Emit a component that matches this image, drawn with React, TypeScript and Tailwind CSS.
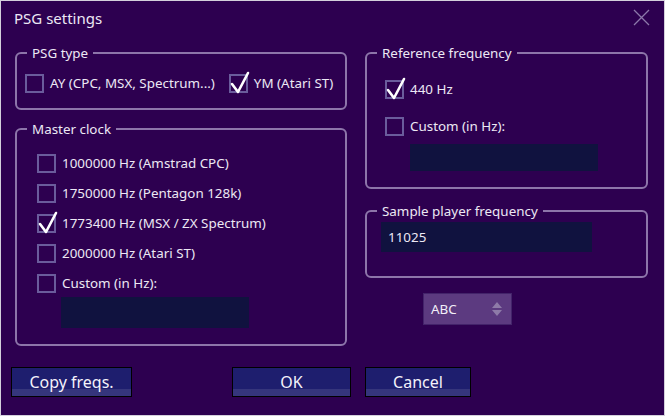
import type { ReactNode } from "react"

function Check({ checked, label }: { checked?: boolean; label: string }) {
    return (
        <div className="flex items-center gap-[6px] h-[20px]">
            <div className="relative w-[19px] h-[19px] border-2 border-[#6a5c9c] shrink-0">
                {checked && (
                    <svg className="absolute left-[-2px] top-[-5px] overflow-visible" width="22" height="24" viewBox="0 0 22 24">
                        <path d="M3 13 L9 21 L19 2" fill="none" stroke="#ffffff" strokeWidth="2.6" strokeLinecap="round" strokeLinejoin="round" />
                    </svg>
                )}
            </div>
            <span className="text-[13.4px] text-[#ece8f4] whitespace-nowrap">{label}</span>
        </div>
    )
}

function Group({ title, className, children }: { title: string; className?: string; children: ReactNode }) {
    return (
        <fieldset className={"min-w-0 border-2 border-[#8d75aa] rounded-[6px] px-[8px] " + (className ?? "")}>
            <legend className="ml-[2px] px-[5px] text-[13.4px] leading-[18px] text-[#ece8f4]">{title}</legend>
            {children}
        </fieldset>
    )
}

function Button({ label, className }: { label: string; className?: string }) {
    return (
        <button className={"h-[30px] border border-black bg-[linear-gradient(#1e1e6e_76%,#35357c_76%)] text-[16px] text-[#f4f2fa] " + (className ?? "")}>
            {label}
        </button>
    )
}

export default function App() {
    return (
        <div className="w-[665px] h-[416px] bg-[#2d0050] border border-[#d4d0dc] flex flex-col font-['Noto_Sans',sans-serif] overflow-hidden">
            <div className="h-[43px] flex items-start justify-between pl-[13px] pr-[14px] pt-[6px]">
                <span className="text-[15px] text-[#ece8f4]">PSG settings</span>
                <svg width="17" height="17" viewBox="0 0 17 17" className="mt-[2px]">
                    <path d="M1 1 L16 16 M16 1 L1 16" stroke="#8c78aa" strokeWidth="1.3" />
                </svg>
            </div>

            <div className="flex gap-[18px] pl-[14px]">
                <div className="w-[332px] flex flex-col gap-[10px]">
                    <Group title="PSG type" className="h-[66px]">
                        <div className="flex gap-[14px] pt-[11px]">
                            <Check label="AY (CPC, MSX, Spectrum...)" />
                            <Check checked label="YM (Atari ST)" />
                        </div>
                    </Group>
                    <Group title="Master clock" className="h-[226px]">
                        <div className="flex flex-col gap-[10px] pl-[12px] pt-[15px]">
                            <Check label="1000000 Hz (Amstrad CPC)" />
                            <Check label="1750000 Hz (Pentagon 128k)" />
                            <Check checked label="1773400 Hz (MSX / ZX Spectrum)" />
                            <Check label="2000000 Hz (Atari ST)" />
                            <Check label="Custom (in Hz):" />
                        </div>
                        <div className="ml-[36px] mt-[4px] w-[188px] h-[31px] bg-[#10123f]" />
                    </Group>
                </div>

                <div className="w-[283px] flex flex-col">
                    <Group title="Reference frequency" className="h-[145px]">
                        <div className="flex flex-col gap-[17px] pl-[10px] pt-[17px]">
                            <Check checked label="440 Hz" />
                            <Check label="Custom (in Hz):" />
                        </div>
                        <div className="ml-[35px] mt-[8px] w-[188px] h-[27px] bg-[#10123f]" />
                    </Group>
                    <Group title="Sample player frequency" className="h-[76px] mt-[13px]">
                        <div className="mt-[2px] ml-[6px] w-[211px] h-[30px] bg-[#10123f] flex items-center pl-[7px] text-[13.4px] text-[#ece8f4]">
                            11025
                        </div>
                    </Group>
                    <div className="ml-[58px] mt-[15px] w-[89px] h-[32px] bg-[#5c3a80] border border-[#43236a] flex items-center justify-between pl-[7px] pr-[9px]">
                        <span className="text-[13.4px] text-[#f2eef8]">ABC</span>
                        <svg width="10" height="16" viewBox="0 0 10 16">
                            <path d="M5 1 L10 7 L0 7 Z M0 9 L10 9 L5 15 Z" fill="#8e7aa8" />
                        </svg>
                    </div>
                </div>
            </div>

            <div className="flex items-center pl-[10px] mt-auto mb-[18px]">
                <Button label="Copy freqs." className="w-[121px]" />
                <Button label="OK" className="w-[119px] ml-[100px]" />
                <Button label="Cancel" className="w-[106px] ml-[14px]" />
            </div>
        </div>
    )
}
